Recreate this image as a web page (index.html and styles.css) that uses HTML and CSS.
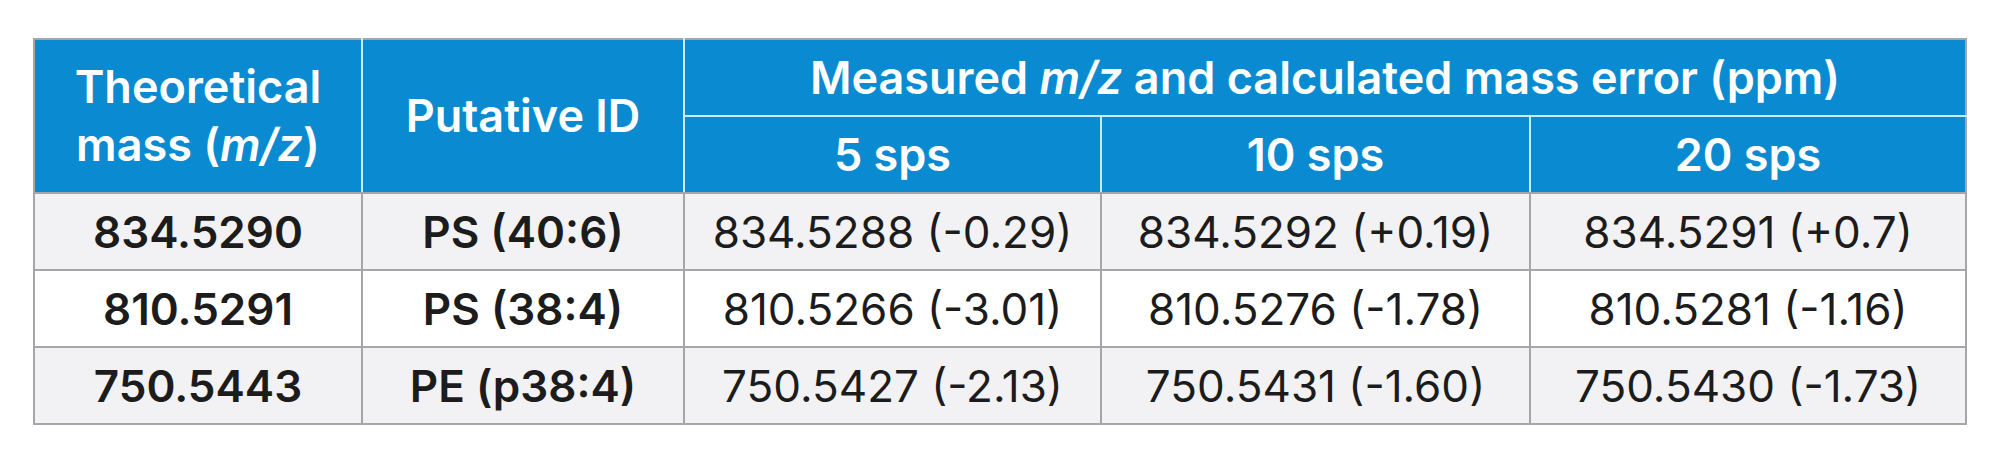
FILE: index.html
```html
<!DOCTYPE html>
<html>
<head>
<meta charset="utf-8">
<link rel="stylesheet" href="styles.css">
</head>
<body>
<table class="data">
  <colgroup>
    <col class="c1"><col class="c2"><col class="c3"><col class="c4"><col class="c5">
  </colgroup>
  <thead>
    <tr class="h1">
      <th rowspan="2" class="two">Theoretical<br>mass (<i>m/z</i>)</th>
      <th rowspan="2">Putative ID</th>
      <th colspan="3">Measured <i>m/z</i> and calculated mass error (ppm)</th>
    </tr>
    <tr class="h2">
      <th>5 sps</th>
      <th>10 sps</th>
      <th>20 sps</th>
    </tr>
  </thead>
  <tbody>
    <tr class="alt">
      <td class="b">834.5290</td><td class="b">PS (40:6)</td>
      <td>834.5288 (-0.29)</td><td>834.5292 (+0.19)</td><td>834.5291 (+0.7)</td>
    </tr>
    <tr>
      <td class="b">810.5291</td><td class="b">PS (38:4)</td>
      <td>810.5266 (-3.01)</td><td>810.5276 (-1.78)</td><td>810.5281 (-1.16)</td>
    </tr>
    <tr class="alt">
      <td class="b">750.5443</td><td class="b">PE (p38:4)</td>
      <td>750.5427 (-2.13)</td><td>750.5431 (-1.60)</td><td>750.5430 (-1.73)</td>
    </tr>
  </tbody>
</table>
</body>
</html>
```

FILE: styles.css
```css
html, body {
  margin: 0;
  padding: 0;
  background: #ffffff;
}
body {
  padding: 38px 0 0 33px;
  font-family: Inter, "Liberation Sans", sans-serif;
}
.data {
  border-collapse: collapse;
  table-layout: fixed;
  width: 1932px;
  border: 2px solid #a4a6a8;
}
.c1 { width: 328px; }
.c2 { width: 322px; }
.c3 { width: 417px; }
.c4 { width: 429px; }
.c5 { width: 436px; }

th {
  background: #0a8bd1;
  color: #ffffff;
  font-weight: 600;
  font-size: 45px;
  line-height: 58px;
  height: 75px;
  padding: 0;
  text-align: center;
  vertical-align: middle;
  border: 2px solid #c9ecfb;
  border-top-color: #a4a6a8;
}
.h2 th { border-top-color: #c9ecfb; border-bottom-color: #a4a6a8; }
.h1 th[rowspan] { border-bottom-color: #a4a6a8; }
th:last-child { border-right-color: #a4a6a8; }
.h1 th:first-child { border-left-color: #a4a6a8; }
th i { font-style: italic; }

td {
  height: 75px;
  padding: 0;
  text-align: center;
  vertical-align: middle;
  font-size: 44px;
  color: #1c1c1c;
  border: 2px solid #a4a6a8;
  background: #ffffff;
}
tr.alt td { background: #f2f2f4; }
td.b { font-weight: 600; }
```
